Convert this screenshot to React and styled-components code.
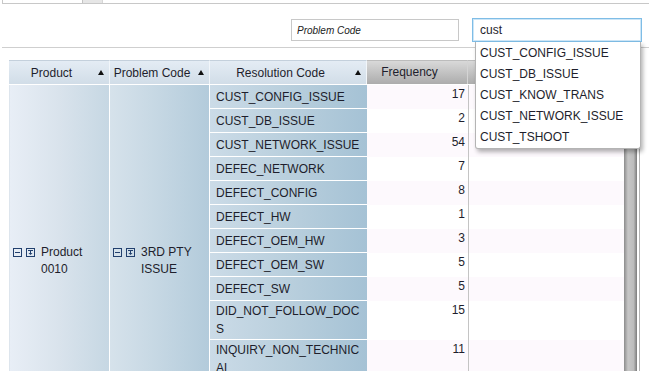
import React from 'react';
import styled, { createGlobalStyle } from 'styled-components';

const GlobalStyle = createGlobalStyle`
  html, body {
    margin: 0;
    padding: 0;
    overflow: hidden;
    background: #fff;
  }
  body {
    font-family: "Liberation Sans", Arial, sans-serif;
    font-size: 12px;
    color: #1e1e2c;
  }
`;

const widths = {product: 101, problem: 100, resolution: 157, frequency: 101, extra: 156, scroll: 16};

const TopFrame = styled.div`
  display: flex;
  height: 3px;
  margin-left: 2px;
  border-left: 1px solid #c8c8c8;
  border-bottom: 1px solid #c8c8c8;
`;

const TopHandle = styled.div`
  margin-left: 79px;
  width: 19px;
  background: #e6e6e6;
  border-left: 1px solid #c4c4c4;
  border-right: 1px solid #d6d6d6;
`;

const SearchBar = styled.div`
  display: flex;
  justify-content: flex-end;
  align-items: center;
  gap: 13px;
  margin-left: 2px;
  padding: 14px 7px 5px 0;
  border-bottom: 1px solid #cfcfcf;
`;

const SearchField = styled.div`
  position: relative;
`;

const SearchInput = styled.input`
  box-sizing: border-box;
  display: block;
  width: ${props => props.$width}px;
  height: ${props => props.$focused ? 24 : 22}px;
  margin: 0;
  padding: 0 0 0 ${props => props.$focused ? 7 : 5}px;
  border: 1px solid ${props => props.$focused ? '#7fbde6' : '#c8c8c8'};
  box-shadow: ${props => props.$focused ? 'inset 0 0 0 1px #cde6f7' : 'none'};
  outline: none;
  font-family: "Liberation Sans", Arial, sans-serif;
  font-size: ${props => props.$focused ? 12 : 10}px;
  font-style: ${props => props.$focused ? 'normal' : 'italic'};
  color: #1e1e2c;

  &::placeholder {
    color: #222;
    opacity: 1;
  }
`;

const Suggestions = styled.ul`
  position: absolute;
  top: 100%;
  left: 3px;
  right: 1px;
  z-index: 10;
  margin: 0;
  padding: 1px 0 0;
  list-style: none;
  background: #fff;
  border: 1px solid #b4b4b4;
  border-top: none;
  border-radius: 0 0 3px 3px;
  box-shadow: 2px 3px 4px rgba(0, 0, 0, 0.3);
`;

const Suggestion = styled.li`
  padding-left: 4px;
  line-height: 21px;
  white-space: nowrap;
`;

const Table = styled.div`
  margin: 12px 0 0 9px;
  width: 631px;
`;

const HeaderRow = styled.div`
  display: flex;
  height: 24px;
`;

const HeaderCell = styled.div`
  box-sizing: border-box;
  display: flex;
  align-items: center;
  width: ${props => props.$width}px;
  border-top: 1px solid ${props => props.$gray ? '#bcbcbc' : '#c4d0dc'};
  border-right: 1px solid ${props => props.$gray ? '#d4d4d4' : '#f2f6fa'};
  background: ${props => props.$gray
    ? 'linear-gradient(#d9d9d9, #acacac)'
    : 'linear-gradient(#e4ecf4, #d1dde8)'};
`;

const HeaderLabel = styled.span`
  flex: 1;
  text-align: center;
  white-space: nowrap;
  margin-top: ${props => props.$gray ? -2 : 0}px;
`;

const SortArrow = styled.span`
  width: 0;
  height: 0;
  margin: 0 5px 0 4px;
  border-left: 3px solid transparent;
  border-right: 3px solid transparent;
  border-bottom: 5px solid ${props => props.$hidden ? 'transparent' : '#111'};
`;

const Body = styled.div`
  display: flex;
  border-top: 1px solid #fff;
`;

const GroupCell = styled.div`
  box-sizing: border-box;
  display: flex;
  align-items: center;
  width: ${props => props.$width}px;
  padding: 9px 0 0 3px;
  border-right: 1px solid #fff;
  border-left: ${props => props.$first ? '1px solid #dde5ed' : 'none'};
  background: ${props => props.$first
    ? 'linear-gradient(to right, #e8eef6, #d9e3ec 50%, #c6d7e3)'
    : 'linear-gradient(to right, #d6e2eb, #c5d7e3 50%, #b3cbdb)'};
`;

const GroupContent = styled.div`
  display: flex;
  align-items: flex-start;
  line-height: 17px;
`;

const ToggleIcon = styled.svg`
  flex: none;
  width: 9px;
  height: 9px;
  margin: 4px 4px 0 0;
`;

const GroupLabel = styled.span`
  margin-left: 2px;
`;

const RowsColumn = styled.div`
  display: flex;
  flex-direction: column;
  width: ${widths.resolution + widths.frequency + widths.extra}px;
`;

const Row = styled.div`
  display: flex;
`;

const CodeCell = styled.div`
  box-sizing: border-box;
  display: flex;
  align-items: center;
  width: ${widths.resolution}px;
  min-height: 24px;
  padding: 1px 6px;
  line-height: 18px;
  word-break: break-all;
  border-bottom: 1px solid #fff;
  background: linear-gradient(to right, #cbdbe7, #b9cfdd 50%, #a5c2d5);
`;

const FreqCell = styled.div`
  box-sizing: border-box;
  width: ${widths.frequency}px;
  padding: 0 3px;
  text-align: right;
  line-height: 18px;
  background: ${props => props.$odd ? '#fdf9fd' : '#fff'};
`;

const ExtraCell = styled.div`
  flex: 1;
  border-left: 1px solid #c4c4c4;
  background: ${props => props.$odd ? '#fdf9fd' : '#fff'};
`;

const ScrollTrack = styled.div`
  width: ${widths.scroll}px;
  background: linear-gradient(to right,
    #8c8c8c 0, #c6c6c6 25%, #bcbcbc 60%, #7c7c7c 81%,
    #fff 81%, #fff 94%, #b4b4b4 94%);
`;

const suggestions = ['CUST_CONFIG_ISSUE', 'CUST_DB_ISSUE', 'CUST_KNOW_TRANS', 'CUST_NETWORK_ISSUE', 'CUST_TSHOOT'];

const rows = [
  ['CUST_CONFIG_ISSUE', 17],
  ['CUST_DB_ISSUE', 2],
  ['CUST_NETWORK_ISSUE', 54],
  ['DEFEC_NETWORK', 7],
  ['DEFECT_CONFIG', 8],
  ['DEFECT_HW', 1],
  ['DEFECT_OEM_HW', 3],
  ['DEFECT_OEM_SW', 5],
  ['DEFECT_SW', 5],
  ['DID_NOT_FOLLOW_DOCS', 15],
  ['INQUIRY_NON_TECHNICAL', 11],
  ['NO_TROUBLE_FOUND', 4],
  ['OTHER', 9]
];

function CollapseIcon() {
  return (
    <ToggleIcon viewBox="0 0 9 9">
      <rect x="0.5" y="0.5" width="8" height="8" fill="none" stroke="#22406e" />
      <path d="M2 4.5H7" stroke="#22406e" />
    </ToggleIcon>
  );
}

function DrillIcon() {
  return (
    <ToggleIcon viewBox="0 0 9 9">
      <rect x="0.5" y="0.5" width="8" height="8" fill="none" stroke="#22406e" />
      <path d="M2 2.5H7M4.5 3V5.5" stroke="#22406e" />
      <path d="M2.5 5H6.5L4.5 7Z" fill="#22406e" />
    </ToggleIcon>
  );
}

function Group({label, width, first}) {
  return (
    <GroupCell $width={width} $first={first}>
      <GroupContent>
        <CollapseIcon />
        <DrillIcon />
        <GroupLabel>{label}</GroupLabel>
      </GroupContent>
    </GroupCell>
  );
}

export default function App() {
  return (
    <>
      <GlobalStyle />
      <TopFrame><TopHandle /></TopFrame>

      <SearchBar>
        <SearchField>
          <SearchInput $width={168} placeholder="Problem Code" readOnly />
        </SearchField>
        <SearchField>
          <SearchInput $width={170} $focused value="cust" readOnly />
          <Suggestions>
            {suggestions.map(s => <Suggestion key={s}>{s}</Suggestion>)}
          </Suggestions>
        </SearchField>
      </SearchBar>

      <Table>
        <HeaderRow>
          <HeaderCell $width={widths.product}><HeaderLabel>Product</HeaderLabel><SortArrow /></HeaderCell>
          <HeaderCell $width={widths.problem}><HeaderLabel>Problem Code</HeaderLabel><SortArrow /></HeaderCell>
          <HeaderCell $width={widths.resolution}><HeaderLabel>Resolution Code</HeaderLabel><SortArrow /></HeaderCell>
          <HeaderCell $width={widths.frequency} $gray><HeaderLabel $gray>Frequency</HeaderLabel><SortArrow $hidden /></HeaderCell>
          <HeaderCell $width={widths.extra} $gray />
          <HeaderCell $width={widths.scroll} $gray />
        </HeaderRow>

        <Body>
          <Group label="Product 0010" width={widths.product} first />
          <Group label="3RD PTY ISSUE" width={widths.problem} />
          <RowsColumn>
            {rows.map(([code, freq], i) => (
              <Row key={code}>
                <CodeCell>{code}</CodeCell>
                <FreqCell $odd={i % 2 === 0}>{freq}</FreqCell>
                <ExtraCell $odd={i % 2 === 0} />
              </Row>
            ))}
          </RowsColumn>
          <ScrollTrack />
        </Body>
      </Table>
    </>
  );
}
